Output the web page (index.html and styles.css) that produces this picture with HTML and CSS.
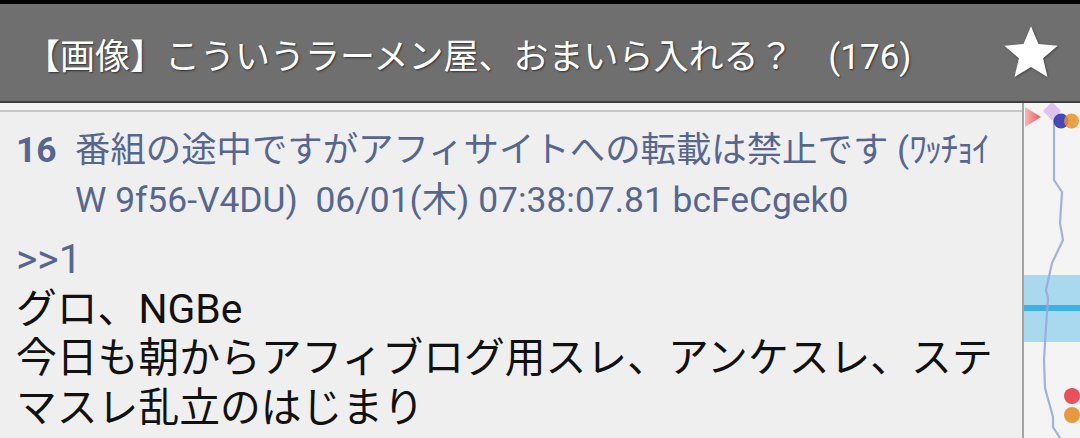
FILE: index.html
```html
<!DOCTYPE html>
<html>
<head>
<meta charset="UTF-8">
<link rel="stylesheet" href="styles.css">
<title>スレッド</title>
</head>
<body>
<div class="status"></div>
<div class="bar">
	<div class="bar_title">【画像】こういうラーメン屋、おまいら入れる？&nbsp;&nbsp;&nbsp; (176)</div>
	<svg class="bar_star" viewBox="0 0 24 24" width="64" height="64"><path d="M12 17.27L18.18 21l-1.64-7.03L22 9.24l-7.19-.61L12 2 9.19 8.63 2 9.24l5.46 4.73L5.82 21z" fill="#fff"/></svg>
</div>
<div class="main">
	<div class="thread">
		<div class="thread_top"></div>
		<div class="res">
			<div class="res_head">
				<span class="res_num">16</span>
				<span class="res_name">番組の途中ですがアフィサイトへの転載は禁止です (<span class="han">ﾜｯﾁｮｲ</span> W 9f56-V4DU)&nbsp; 06/01(木) 07:38:07.81 bcFeCgek0</span>
			</div>
			<div class="res_body">
				<span class="anchor">&gt;&gt;1</span><br>
				グロ、NGBe<br>
				今日も朝からアフィブログ用スレ、アンケスレ、ステマスレ乱立のはじまり
			</div>
		</div>
	</div>
	<div class="minimap">
		<svg width="56" height="335" viewBox="0 0 56 335">
			<defs>
				<linearGradient id="tri" x1="0" y1="0" x2="1" y2="0">
					<stop offset="0" stop-color="#f7b8b8"/>
					<stop offset="1" stop-color="#ea5c5c"/>
				</linearGradient>
			</defs>
			<rect x="0" y="172" width="56" height="67" fill="#a8d9ef"/>
			<rect x="0" y="202" width="56" height="6" fill="#3fb0e2"/>
			<polygon points="1,4 17,14 1,24" fill="url(#tri)"/>
			<polyline points="30,10 30,77 38,89 36,120 39,137 28,160 22,187 24,195 22,224 20,257 21,285 29,314 29,324 36,335" fill="none" stroke="#9ba9da" stroke-width="2.2" opacity="0.9"/>
			<rect x="21.5" y="1.5" width="13" height="13" rx="1.5" fill="#dcc4ec" transform="rotate(45 28 8)"/>
			<circle cx="37" cy="18" r="7.5" fill="#3434b4" opacity="0.9"/>
			<circle cx="47.5" cy="18" r="7.5" fill="#e8902a" opacity="0.85"/>
			<circle cx="48" cy="293" r="8" fill="#e9505c"/>
			<circle cx="48" cy="312" r="8" fill="#e8983e"/>
		</svg>
	</div>
</div>
</body>
</html>
```

FILE: styles.css
```css
body {
	margin: 0;
	width: 1080px;
	height: 438px;
	overflow: hidden;
	background: #efefef;
	font-family: Roboto, "Noto Sans CJK JP", sans-serif;
}
.status {
	height: 4px;
	background: #000;
}
.bar {
	height: 97px;
	display: flex;
	align-items: center;
	justify-content: space-between;
	padding-left: 25px;
	background: #6f6f6f;
	border-bottom: 2px solid #3e3e3e;
}
.bar_title {
	color: #fff;
	font-size: 35px;
	padding-top: 2px;
	text-shadow: 1px 1px 2px rgba(0,0,0,0.55);
	white-space: nowrap;
}
.bar_star {
	margin-right: 17px;
	filter: drop-shadow(1px 1px 1px rgba(0,0,0,0.35));
}
.main {
	display: flex;
	height: 335px;
}
.thread {
	flex: 1;
	border-right: 2px solid #a3a3a3;
}
.thread_top {
	height: 7px;
	background: #f2f2f2;
	border-bottom: 2px solid #c6c6c6;
}
.res {
	padding: 13px 18px 0 16px;
}
.res_head {
	display: flex;
	color: #56668f;
	font-size: 35.4px;
	line-height: 50px;
}
.res_num {
	flex: none;
	width: 59px;
	font-weight: bold;
}
.han {
	letter-spacing: -2px;
}
.res_body {
	margin-top: 10px;
	color: #111;
	font-size: 40.8px;
	line-height: 49.5px;
}
.anchor {
	color: #56668f;
}
.minimap {
	width: 56px;
	background: #f4f4f4;
}
.minimap svg {
	display: block;
}
```
